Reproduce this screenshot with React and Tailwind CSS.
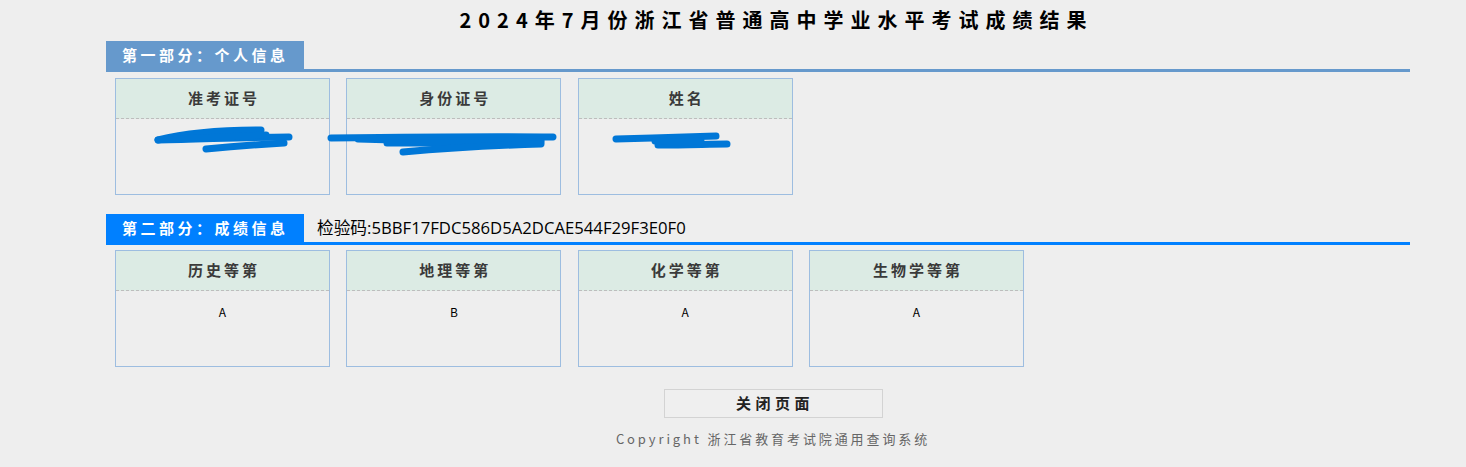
import React from 'react';

const Scribble = ({ lines }) => (
  <svg
    className="absolute left-0 top-0 pointer-events-none overflow-visible"
    width="215"
    height="117"
    viewBox="0 0 215 117"
  >
    {lines.map((d, i) => (
      <path
        key={i}
        d={d}
        fill="none"
        stroke="#0077d7"
        strokeWidth={7}
        strokeLinecap="round"
        strokeLinejoin="round"
      />
    ))}
  </svg>
);

const redactions = {
  id: [
    'M42 61 C70 54 110 51 145 51',
    'M42 61 C90 60 140 58 173 58',
    'M60 60 C100 58 130 57 150 56',
    'M90 70 C120 67 150 65 168 64',
  ],
  card: [
    'M-16 59 C60 58 140 57 206 58',
    'M11 60 C80 62 150 63 194 61',
    'M40 64 C100 64 160 64 194 63',
    'M56 73 C100 69 160 66 194 65',
  ],
  name: [
    'M37 60 C70 59 110 58 137 57',
    'M79 66 C110 66 130 65 148 65',
    'M76 62 C95 63 110 63 122 62',
  ],
};

const Card = ({ label, value, scribble }) => (
  <div className="relative w-[215px] h-[117px] border border-[#9dbde0]">
    <div className="h-[40px] bg-[#dcebe4] border-b border-dashed border-[#bdbdbd] flex items-center justify-center text-[15px] font-bold text-[#3a3a3a] tracking-[3px] pl-[3px]">
      {label}
    </div>
    <div className="pt-[13px] text-center text-[12px] leading-[16px] text-black">
      {value}
    </div>
    {scribble && <Scribble lines={scribble} />}
  </div>
);

const SectionHeader = ({ title, color, children }) => (
  <div className={`flex items-end mr-[30px] border-b-[3px] ${color}`}>
    <div
      className={`w-[198px] h-[28px] pl-[16px] text-white font-bold text-[15px] leading-[28px] tracking-[3.5px] ${
        color === 'border-[#6699cc]' ? 'bg-[#6699cc]' : 'bg-[#0080ff]'
      }`}
    >
      {title}
    </div>
    {children}
  </div>
);

export default function App() {
  return (
    <div className="min-h-screen bg-[#eeeeee] font-['Noto_Sans_CJK_SC',sans-serif]">
      <div className="ml-[106px] w-[1334px] pt-[6px]">
        <h1 className="text-center text-[20px] leading-[28px] font-bold tracking-[7px] text-black pl-[7px]">
          2024年7月份浙江省普通高中学业水平考试成绩结果
        </h1>

        {/* 个人信息 */}
        <div className="mt-[7px]">
          <SectionHeader title="第一部分：个人信息" color="border-[#6699cc]" />
          <div className="flex gap-[16.33px] pl-[9px] mt-[6px]">
            <Card label="准考证号" value="" scribble={redactions.id} />
            <Card label="身份证号" value="" scribble={redactions.card} />
            <Card label="姓名" value="" scribble={redactions.name} />
          </div>
        </div>

        {/* 成绩信息 */}
        <div className="mt-[19px]">
          <SectionHeader title="第二部分：成绩信息" color="border-[#0080ff]">
            <div className="ml-[13px] pb-[1px] text-[16.7px] leading-[26px] text-black font-['Open_Sans','Noto_Sans_CJK_SC',sans-serif]">
              检验码:5BBF17FDC586D5A2DCAE544F29F3E0F0
            </div>
          </SectionHeader>
          <div className="flex gap-[16.33px] pl-[9px] mt-[5px]">
            <Card label="历史等第" value="A" />
            <Card label="地理等第" value="B" />
            <Card label="化学等第" value="A" />
            <Card label="生物学等第" value="A" />
          </div>
        </div>

        <div className="flex justify-center mt-[22px]">
          <button className="w-[219px] h-[29px] border border-[#d3d3d3] bg-[#efefef] text-[15px] font-bold text-[#222222] tracking-[4.5px] pl-[4px]">
            关闭页面
          </button>
        </div>

        <div className="mt-[11px] text-center text-[13px] leading-[20px] text-[#666666] tracking-[2.9px]">
          Copyright 浙江省教育考试院通用查询系统
        </div>
      </div>
    </div>
  );
}
